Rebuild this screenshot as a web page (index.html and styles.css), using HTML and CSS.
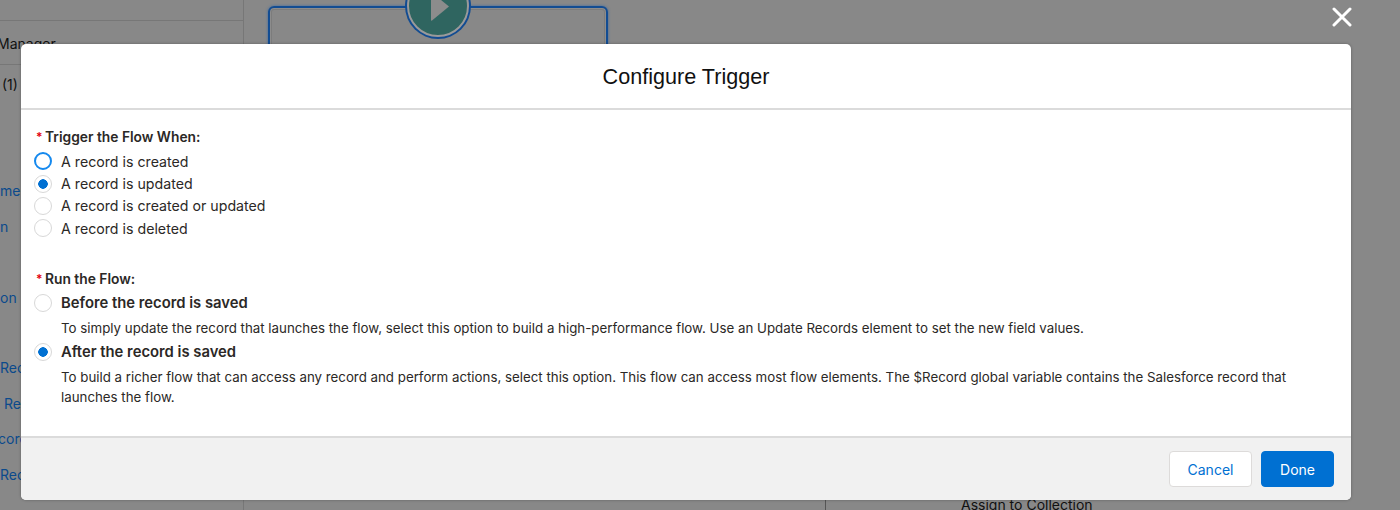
FILE: index.html
```html
<!DOCTYPE html>
<html lang="en">

<head>
  <meta charset="UTF-8">
  <meta name="viewport" content="width=device-width, initial-scale=1.0">
  <title>Configure Trigger</title>
  <link rel="stylesheet" href="styles.css">
</head>

<body>
  <div id="backdrop">
    <div id="sidebar">
      <div class="side-row side-manager"><span>Manager</span></div>
      <div class="side-row side-count">(1)</div>
      <a class="side-link first">men</a>
      <a class="side-link">n</a>
      <a class="side-link group-on">on</a>
      <a class="side-link group-rec">Rec</a>
      <a class="side-link indent">Re</a>
      <a class="side-link outdent">cord</a>
      <a class="side-link">Rec</a>
    </div>
    <div id="canvas">
      <div class="start-box"></div>
      <div class="start-node">
        <svg width="18" height="29" viewBox="0 0 18 29"><path d="M0 1 Q0 0 1 0.6 L18 14.5 L1 28.4 Q0 29 0 28 Z" fill="#8c8c8c" /></svg>
      </div>
    </div>
    <div id="panel">
      <div class="panel-item">Assign to Collection</div>
    </div>
  </div>

  <button id="close" aria-label="Close">
    <svg width="20" height="20" viewBox="0 0 20 20"><path d="M2 2 L18 18 M18 2 L2 18" stroke="#fff" stroke-width="3" stroke-linecap="round" /></svg>
  </button>

  <div id="modal">
    <div class="modal-head">Configure Trigger</div>

    <form class="modal-body">
      <div class="field-label"><span class="req">*</span>Trigger the Flow When:</div>
      <label class="radio-row"><input type="radio" name="when" class="focused" />A record is created</label>
      <label class="radio-row"><input type="radio" name="when" checked />A record is updated</label>
      <label class="radio-row"><input type="radio" name="when" />A record is created or updated</label>
      <label class="radio-row"><input type="radio" name="when" />A record is deleted</label>

      <div class="field-label run-label"><span class="req">*</span>Run the Flow:</div>
      <label class="radio-row big"><input type="radio" name="run" />Before the record is saved</label>
      <p class="hint">To simply update the record that launches the flow, select this option to build a high-performance flow. Use an Update Records element to set the new field values.</p>
      <label class="radio-row big"><input type="radio" name="run" checked />After the record is saved</label>
      <p class="hint">To build a richer flow that can access any record and perform actions, select this option. This flow can access most flow elements. The $Record global variable contains the Salesforce record that launches the flow.</p>
    </form>

    <div class="modal-foot">
      <button class="btn">Cancel</button>
      <button class="btn primary">Done</button>
    </div>
  </div>
</body>

</html>
```

FILE: styles.css
```css
html, body {
  margin: 0;
  height: 100%;
  overflow: hidden;
}
body {
  background-color: #888;
  font-family: "Inter", "Liberation Sans", sans-serif;
  font-size: 14px;
  color: #2b2826;
}
#backdrop {
  display: flex;
  height: 510px;
  overflow: hidden;
}
#sidebar {
  width: 243px;
  flex-shrink: 0;
  border-right: 1px solid #777;
  overflow: hidden;
}
.side-row {
  color: #111;
  border-bottom: 1px solid #777;
}
.side-manager {
  margin-top: 20px;
  height: 43px;
  line-height: 46px;
  border-top: 1px solid #777;
}
.side-manager span {
  display: block;
  margin-left: -3px;
}
.side-count {
  border-bottom: 0;
  height: 40px;
  line-height: 40px;
  padding-left: 2px;
}
.side-link {
  display: block;
  height: 35.5px;
  line-height: 35.5px;
  color: #0b4a8c;
}
.side-link.first { margin-top: 68.25px; }
.side-link.group-on { margin-top: 36px; }
.side-link.group-rec { margin-top: 34.5px; }
.side-link.indent { padding-left: 4px; }
.side-link.outdent { margin-left: -2px; }
#canvas {
  position: relative;
  width: 581px;
  flex-shrink: 0;
}
.start-box {
  position: absolute;
  left: 24px;
  top: 6px;
  width: 336px;
  height: 200px;
  border: 2px solid #124c92;
  border-radius: 6px;
  box-shadow: inset 0 0 0 1px #8c8c8c, inset 0 0 0 2px #7c7c7c, 0 0 3px #3a6aa5;
}
.start-node {
  position: absolute;
  left: 163px;
  top: -25px;
  width: 58px;
  height: 58px;
  border: 2px solid #9a9a9a;
  border-radius: 50%;
  background-color: #2f6560;
  box-shadow: 0 0 0 2px #124c92;
  display: flex;
  align-items: center;
  justify-content: center;
}
.start-node svg {
  margin-left: 3px;
}
#panel {
  flex-grow: 1;
  display: flex;
  flex-direction: column;
  justify-content: flex-end;
}
.panel-item {
  border-left: 1px solid #555;
  padding: 60px 0 0 135px;
  margin-bottom: -3px;
  line-height: 16px;
  color: #111;
}
#close {
  position: absolute;
  left: 1332px;
  top: 7px;
  padding: 0;
  border: 0;
  background: none;
  line-height: 0;
}
#modal {
  position: absolute;
  left: 21px;
  top: 44px;
  width: 1330px;
  height: 456px;
  display: flex;
  flex-direction: column;
  background-color: white;
  border-radius: 5px;
  overflow: hidden;
  box-shadow: 0 0 3px rgba(0, 0, 0, 0.3);
}
.modal-head {
  height: 64px;
  line-height: 66px;
  flex-shrink: 0;
  border-bottom: 2px solid #dbdbdb;
  text-align: center;
  font-family: "Liberation Sans", sans-serif;
  font-size: 21.6px;
  color: #111;
}
.modal-body {
  flex-grow: 1;
  padding: 17px 16px 0;
}
.field-label {
  display: flex;
  line-height: 20px;
  font-weight: 600;
  font-size: 13.8px;
  margin-bottom: 3px;
}
.req {
  width: 8px;
  margin-left: -1px;
  margin-right: 1px;
  font-size: 12px;
  color: #e3000f;
}
.run-label {
  margin-top: 29.4px;
  margin-bottom: 2px;
}
.radio-row {
  display: flex;
  align-items: center;
  height: 22.4px;
  margin-left: -3px;
  font-size: 14.2px;
}
.radio-row input {
  appearance: none;
  width: 18px;
  height: 18px;
  margin: 0 9px 0 0;
  flex-shrink: 0;
  border: 1px solid #d8d8d8;
  border-radius: 50%;
  background-color: white;
}
.radio-row input:checked {
  background: radial-gradient(circle, #0070d2 0 4.5px, white 5px);
}
.radio-row input.focused {
  border: 2px solid #1589ee;
}
.radio-row.big {
  height: 24px;
  font-size: 14.8px;
  font-weight: 600;
}
.hint {
  margin: 3px 0 2px 24px;
  line-height: 20px;
  font-size: 13.3px;
}
.modal-foot {
  height: 64px;
  flex-shrink: 0;
  border-top: 2px solid #dbdbdb;
  background-color: #f1f1f1;
  display: flex;
  justify-content: flex-end;
  align-items: center;
  gap: 9px;
  padding-right: 17px;
  box-sizing: border-box;
}
.btn {
  height: 36px;
  width: 83px;
  border: 1px solid #dddbda;
  border-radius: 4px;
  background-color: white;
  color: #0070d2;
  font-family: inherit;
  font-size: 14px;
}
.btn.primary {
  width: 73px;
  border-color: #0070d2;
  background-color: #0070d2;
  color: white;
}
```
